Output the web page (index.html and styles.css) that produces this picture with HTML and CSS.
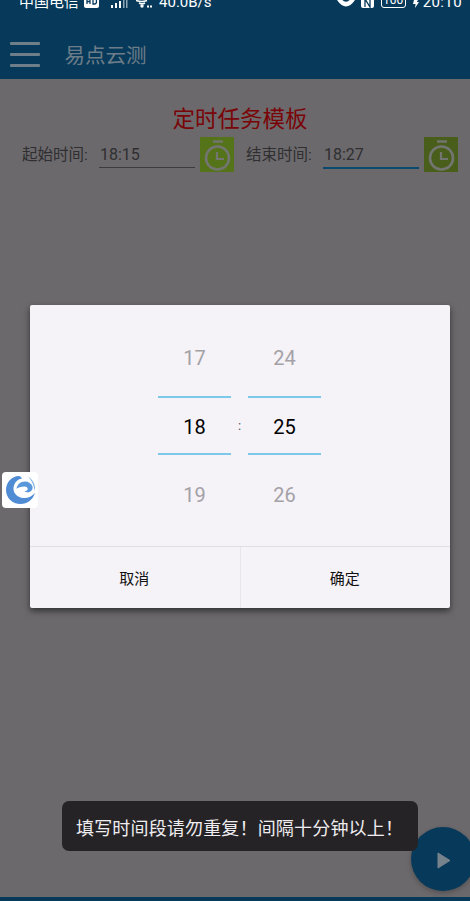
FILE: index.html
```html
<!DOCTYPE html>
<html lang="zh-CN">
<head>
    <meta charset="UTF-8">
    <meta name="viewport" content="width=device-width, initial-scale=1.0">
    <title>易点云测</title>
    <link rel="stylesheet" href="styles.css">
</head>
<body>
    <div class="screen">
        <header class="appbar">
            <div class="status">
                <span class="carrier">中国电信</span>
                <svg class="hd" width="15" height="9" viewBox="0 0 15 9"><rect x="0" y="-2" width="15" height="11" rx="2" fill="#fff"/><path d="M3 0v5M6 0v5M3 2.500h3M9 0v5h1.500q2 0 2-2.500T10.500 0z" fill="none" stroke="#073a5a" stroke-width="1.300"/></svg>
                <svg class="signal" width="17" height="8" viewBox="0 0 17 8"><path d="M0 5h2v3H0zM4 3h2v5H4zM8 1h2v7H8z" fill="#fff"/><path d="M12 0h1.500v8H12zM15 0h1.500v8H15z" fill="#8fa6b5"/></svg>
                <svg class="wifi" width="16" height="8" viewBox="0 0 16 8"><path d="M0 .5q6 2 11 0M3 3q3 1.500 6 0" fill="none" stroke="#fff" stroke-width="1.600"/><circle cx="6" cy="6" r="1.700" fill="#fff"/><path d="M11 5.500h2v2h-2zM14 5.500h2v2h-2z" fill="#fff"/></svg>
                <span class="speed">40.0B/s</span>
                <span class="spacer"></span>
                <svg class="eye" width="18" height="8" viewBox="0 0 18 8"><path d="M0 0h18Q9 13 0 0z" fill="#fff"/><path d="M5.500 0a4 3.500 0 0 0 7 0z" fill="#073a5a"/></svg>
                <svg class="nfc" width="13" height="9" viewBox="0 0 13 9"><path d="M0 0h13v7q0 2-2 2H2q-2 0-2-2z" fill="#fff"/><path d="M4 8V0l5 8V0" fill="none" stroke="#073a5a" stroke-width="1.300"/></svg>
                <span class="battery">100</span>
                <svg class="bolt" width="6" height="8" viewBox="0 0 6 8"><path d="M1 0h4L3.800 2H6L2 8l.6-4H0z" fill="#fff"/></svg>
                <span class="clock-text">20:10</span>
            </div>
            <div class="toolbar">
                <div class="burger"><i></i><i></i><i></i></div>
                <span class="app-title">易点云测</span>
            </div>
        </header>

        <main class="content">
            <h1 class="page-title">定时任务模板</h1>
            <div class="time-row">
                <div class="time-field">
                    <label>起始时间:</label>
                    <span class="time-input">18:15</span>
                    <span class="clock-btn">
                        <svg width="34" height="35" viewBox="0 0 34 35"><path d="M13 4.500h10" stroke="#737570" stroke-width="2.400"/><circle cx="17.500" cy="21" r="11.500" fill="none" stroke="#737570" stroke-width="2.600"/><path d="M17 15V22H24" fill="none" stroke="#737570" stroke-width="2.200"/></svg>
                    </span>
                </div>
                <div class="time-field">
                    <label>结束时间:</label>
                    <span class="time-input is-active">18:27</span>
                    <span class="clock-btn is-dim">
                        <svg width="34" height="35" viewBox="0 0 34 35"><path d="M13 4.500h10" stroke="#737570" stroke-width="2.400"/><circle cx="17.500" cy="21" r="11.500" fill="none" stroke="#737570" stroke-width="2.600"/><path d="M17 15V22H24" fill="none" stroke="#737570" stroke-width="2.200"/></svg>
                    </span>
                </div>
            </div>
        </main>

        <div class="bottom-bar"></div>
    </div>

    <div class="fab">
        <svg width="14" height="17" viewBox="0 0 14 17"><path d="M1 1 13 8.500 1 16z" fill="#76828c" stroke="#76828c" stroke-linejoin="round"/></svg>
    </div>

    <div class="dialog">
        <div class="picker">
            <div class="wheel">
                <span class="num">17</span>
                <span class="num is-current">18</span>
                <span class="num">19</span>
            </div>
            <span class="colon">:</span>
            <div class="wheel">
                <span class="num">24</span>
                <span class="num is-current">25</span>
                <span class="num">26</span>
            </div>
        </div>
        <div class="actions">
            <button class="action">取消</button>
            <button class="action">确定</button>
        </div>
    </div>

    <div class="float-logo">
        <svg width="36" height="36" viewBox="0 0 36 36">
            <path d="M17 4C9.500 4 4 10.500 4 18c0 8 6.500 14 14.500 14 7 0 12.500-4.500 14.500-11-3 3.500-7.500 5.500-12 5-5-.5-9-4-9.500-8.500C11.200 12.500 14.500 7 20 6.500 19 5 18 4.300 17 4z" fill="#4f8cd4"/>
            <path d="M14.500 17c.5-4.500 4-7.500 8.500-7.500 3.500 0 6.500 2 7.500 5 .5 2-.5 4.500-3 5.500-2 .8-4 .2-5-1 1.500.2 3-.5 3.200-1.800.2-1.500-1.200-2.700-3.200-2.700-3.500 0-6.500 1-8.500 2.500z" fill="#5a97db"/>
            <path d="M26 4.500c4 2.500 7 7 7 11.500 0 1-.1 2-.4 2.800C32 13.500 30 8.500 26 4.500z" fill="#7fb2e6"/>
        </svg>
    </div>

    <div class="toast">填写时间段请勿重复！间隔十分钟以上！</div>
</body>
</html>
```

FILE: styles.css
```css
* {
    box-sizing: border-box;
}
html, body {
    margin: 0;
    padding: 0;
    height: 901px;
    overflow: hidden;
}
body {
    position: relative;
    font-family: Roboto, "Noto Sans CJK SC", sans-serif;
    background-color: #6b696c;
}
.screen {
    display: flex;
    flex-direction: column;
    height: 901px;
}

/* top bar */
.appbar {
    background-color: #073a5a;
    height: 79px;
}
.status {
    display: flex;
    align-items: flex-end;
    height: 11px;
    overflow: hidden;
    padding: 0 8px 0 19px;
    color: #fff;
    font-size: 15px;
    line-height: 20px;
}
.status svg,
.status span {
    flex: none;
}
.status span {
    margin-bottom: -1px;
}
.status svg {
    margin-bottom: 3px;
}
.hd {
    margin-left: 5px;
}
.signal {
    margin-left: 12px;
}
.wifi {
    margin-left: 8px;
}
.speed {
    margin-left: 7px;
}
.status .spacer {
    flex: 1;
}
.nfc {
    margin-left: 6px;
}
.status .battery {
    margin-left: 7px;
    margin-bottom: 3px;
    width: 25px;
    height: 22px;
    border: 1px solid #fff;
    border-radius: 3px;
    font-size: 12px;
    line-height: 27px;
    text-align: center;
}
.bolt {
    margin-left: 7px;
}
.clock-text {
    margin-left: 4px;
    letter-spacing: .4px;
}
.toolbar {
    display: flex;
    align-items: center;
    height: 68px;
    padding: 18px 0 0 10px;
}
.burger {
    display: flex;
    flex-direction: column;
    justify-content: space-between;
    width: 30px;
    height: 25px;
}
.burger i {
    display: block;
    height: 3px;
    border-radius: 1px;
    background-color: #6f7f8a;
}
.app-title {
    margin-left: 24.500px;
    font-size: 20.500px;
    color: #6c7d89;
}

/* page behind the dialog */
.content {
    flex: 1;
    padding-top: 24px;
}
.page-title {
    margin: 0 0 0 10px;
    font-size: 22.500px;
    font-weight: 400;
    line-height: 32px;
    text-align: center;
    color: #7a0508;
}
.time-row {
    display: flex;
    margin-top: 2px;
    padding-left: 22px;
    gap: 12px;
}
.time-field {
    display: flex;
    align-items: flex-start;
    height: 35px;
    color: #2f2e30;
}
.time-field label {
    width: 77px;
    font-size: 15.500px;
    line-height: 37px;
}
.time-input {
    width: 96px;
    height: 24px;
    margin-top: 7px;
    padding-left: 1px;
    border-bottom: 1px solid #3c3b3d;
    font-size: 16px;
    line-height: 22px;
}
.time-input.is-active {
    height: 25px;
    border-bottom: 2px solid #0a4a70;
}
.clock-btn {
    display: block;
    width: 34px;
    height: 35px;
    margin-left: 5px;
    background-color: #557318;
}
.clock-btn.is-dim {
    background-color: #4a5e1c;
}
.clock-btn svg {
    display: block;
}

.bottom-bar {
    height: 4px;
    background-color: #073a5a;
}

/* overlays */
.fab {
    position: absolute;
    left: 411px;
    top: 827px;
    display: flex;
    align-items: center;
    justify-content: center;
    width: 64px;
    height: 64px;
    padding: 2px 0 0 1px;
    border-radius: 50%;
    background-color: #073a5a;
    box-shadow: 0 2px 5px rgba(0, 0, 0, .25);
}
.dialog {
    position: absolute;
    left: 30px;
    top: 305px;
    width: 420px;
    height: 303px;
    border-radius: 2px;
    background-color: #f5f2f8;
    box-shadow: 0 3px 6px rgba(0, 0, 0, .55);
}
.picker {
    display: flex;
    justify-content: center;
    align-items: flex-start;
    height: 241px;
    padding: 19px 1px 0 0;
    gap: 6px;
}
.wheel {
    display: flex;
    flex-direction: column;
    width: 73px;
}
.num {
    height: 68px;
    font-size: 20px;
    line-height: 68px;
    text-align: center;
    color: #a3a1a6;
}
.num.is-current {
    height: 59px;
    line-height: 58px;
    margin: 4px 0 6px;
    border-top: 2px solid #7cc8e8;
    border-bottom: 2px solid #7cc8e8;
    color: #000;
}
.colon {
    width: 5px;
    margin-top: 93px;
    font-size: 13px;
    line-height: 18px;
    text-align: center;
    color: #55535a;
}
.actions {
    display: flex;
    height: 62px;
    border-top: 1px solid #e0dde3;
}
.action {
    flex: 1;
    padding: 0 1px 0 0;
    border: 0;
    background: none;
    font-family: "Noto Sans CJK SC", sans-serif;
    font-size: 15px;
    color: #111;
}
.action + .action {
    border-left: 1px solid #e8e5eb;
}
.float-logo {
    position: absolute;
    left: 2px;
    top: 472px;
    width: 36px;
    height: 36px;
    border-radius: 4px;
    background-color: #fff;
}
.float-logo svg {
    display: block;
}
.toast {
    position: absolute;
    left: 62px;
    top: 801px;
    width: 356px;
    height: 50px;
    padding-left: 14px;
    border-radius: 7px;
    background-color: #252326;
    font-family: "Noto Sans CJK SC", sans-serif;
    font-size: 18px;
    letter-spacing: .17px;
    line-height: 52px;
    color: #efedf0;
    white-space: nowrap;
}
```
